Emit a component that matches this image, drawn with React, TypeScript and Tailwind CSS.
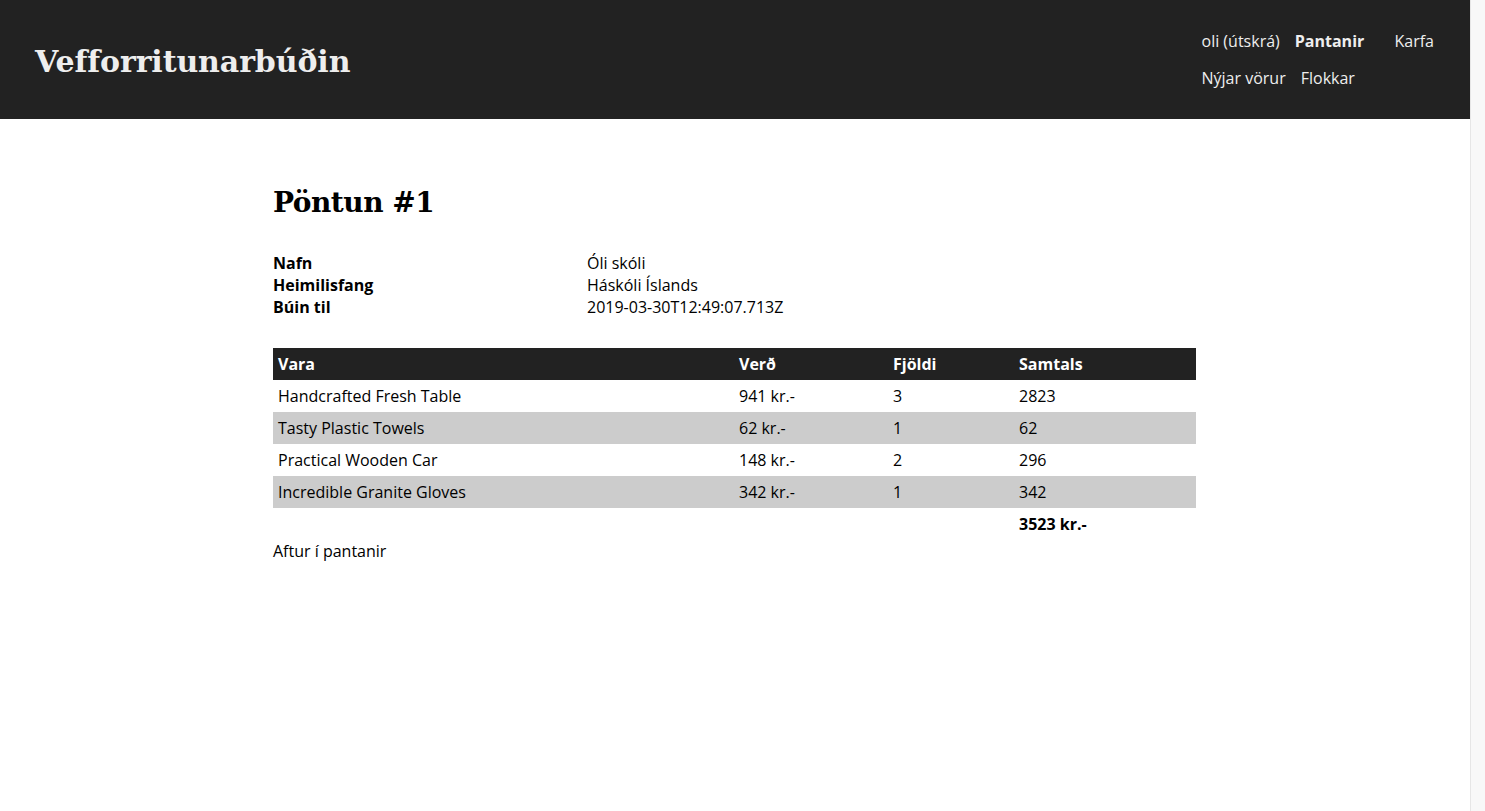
import React from "react";

const sans = "font-['Open_Sans',sans-serif]";
const serif = "font-['DejaVu_Serif',serif]";

const rows = [
  { name: "Handcrafted Fresh Table", price: "941 kr.-", qty: "3", total: "2823" },
  { name: "Tasty Plastic Towels", price: "62 kr.-", qty: "1", total: "62" },
  { name: "Practical Wooden Car", price: "148 kr.-", qty: "2", total: "296" },
  { name: "Incredible Granite Gloves", price: "342 kr.-", qty: "1", total: "342" },
];

export default function App() {
  return (
    <div className={`flex h-[811px] w-[1485px] overflow-hidden bg-white text-black ${sans}`}>
      <div className="flex w-[1470px] flex-col">
        <header className="flex h-[119px] items-start justify-between bg-[#222222] pl-[35px] pr-[36px] text-[#eeeeee]">
          <h1 className={`${serif} mt-[42px] text-[30px] font-bold leading-[40px] tracking-[-0.1px]`}>
            Vefforritunarbúðin
          </h1>
          <nav className="mt-[29px] flex text-[16px] leading-[24px]">
            <ul className="flex w-[163px] flex-wrap gap-x-[15px] gap-y-[13px]">
              <li>oli (útskrá)</li>
              <li className="font-bold">Pantanir</li>
              <li>Nýjar vörur</li>
              <li>Flokkar</li>
            </ul>
            <div className="ml-[30px]">Karfa</div>
          </nav>
        </header>
        <main className="ml-[273px] w-[923px] pt-[64px]">
          <h2 className={`${serif} text-[28px] font-bold leading-[40px] tracking-[-0.5px]`}>Pöntun #1</h2>
          <dl className="mt-[29px] grid grid-cols-[314px_1fr] text-[16px] leading-[22px]">
            <dt className="font-bold">Nafn</dt>
            <dd>Óli skóli</dd>
            <dt className="font-bold">Heimilisfang</dt>
            <dd>Háskóli Íslands</dd>
            <dt className="font-bold">Búin til</dt>
            <dd>2019-03-30T12:49:07.713Z</dd>
          </dl>
          <table className="mt-[30px] w-full border-collapse text-[16px] leading-[32px]">
            <thead>
              <tr className="bg-[#222222] text-left font-bold text-white">
                <th className="w-[461px] px-[5px] py-0">Vara</th>
                <th className="w-[154px] px-[5px] py-0">Verð</th>
                <th className="w-[126px] px-[5px] py-0">Fjöldi</th>
                <th className="px-[5px] py-0">Samtals</th>
              </tr>
            </thead>
            <tbody>
              {rows.map((r, i) => (
                <tr key={r.name} className={i % 2 === 1 ? "bg-[#cccccc]" : "bg-white"}>
                  <td className="px-[5px] py-0">{r.name}</td>
                  <td className="px-[5px] py-0">{r.price}</td>
                  <td className="px-[5px] py-0">{r.qty}</td>
                  <td className="px-[5px] py-0">{r.total}</td>
                </tr>
              ))}
              <tr>
                <td className="px-[5px] py-0"></td>
                <td className="px-[5px] py-0"></td>
                <td className="px-[5px] py-0"></td>
                <td className="px-[5px] py-0 font-bold">3523 kr.-</td>
              </tr>
            </tbody>
          </table>
          <p className="text-[16px] leading-[22px]">Aftur í pantanir</p>
        </main>
      </div>
      <div className="h-full w-[15px] border-l border-[#e6e6e6] bg-[#f8f8f8]" />
    </div>
  );
}
